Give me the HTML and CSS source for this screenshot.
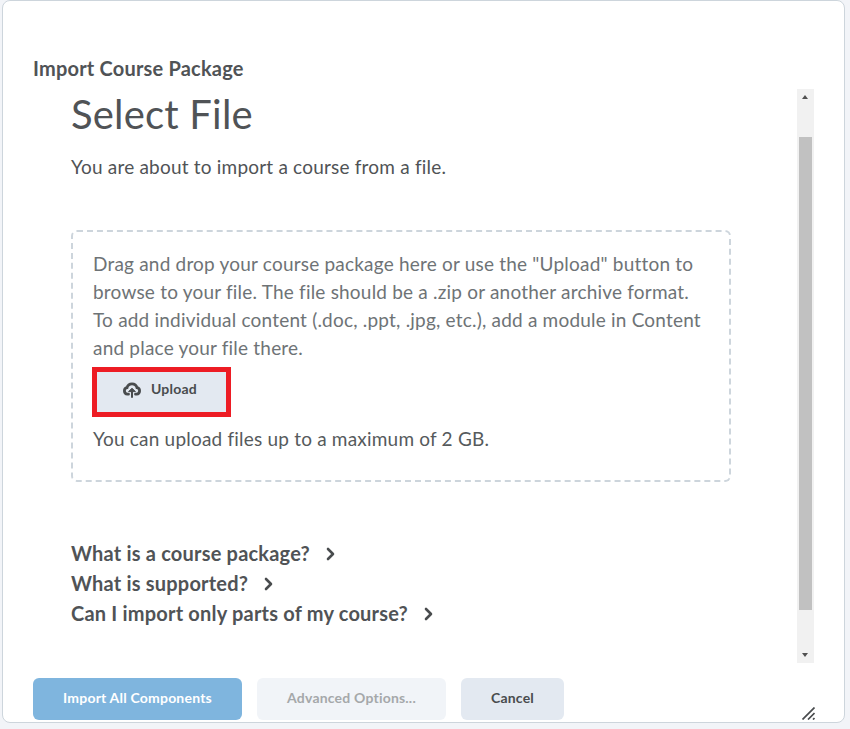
FILE: index.html
```html
<!DOCTYPE html>
<html lang="en">
<head>
<meta charset="utf-8">
<title>Import Course Package</title>
<link rel="stylesheet" href="styles.css">
</head>
<body>
<div class="dialog">
  <div class="dialog-title">Import Course Package</div>
  <div class="scroll-row">
    <div class="content">
      <h1 class="heading">Select File</h1>
      <p class="intro">You are about to import a course from a file.</p>
      <div class="dropzone">
        <p class="drop-text">Drag and drop your course package here or use the "Upload" button to browse to your file. The file should be a .zip or another archive format. To add individual content (.doc, .ppt, .jpg, etc.), add a module in Content and place your file there.</p>
        <div class="highlight">
          <button class="upload-btn">
            <svg class="upload-icon" viewBox="0 0 18 16" width="18" height="16" aria-hidden="true">
              <path d="M5.5 12.2H4.4A3.3 3.3 0 0 1 4 5.7 5.2 5.2 0 0 1 14 5.7a3.3 3.3 0 0 1-.4 6.5h-1.1" fill="none" stroke="#494c4e" stroke-width="2.8" stroke-linecap="round"/>
              <path d="M9 15V8" fill="none" stroke="#494c4e" stroke-width="2" stroke-linecap="round"/>
              <path d="M5.6 9.6 9 6.2l3.4 3.4z" fill="#494c4e" stroke="#494c4e" stroke-width="1" stroke-linejoin="round"/>
            </svg>
            <span>Upload</span>
          </button>
        </div>
        <p class="limit">You can upload files up to a maximum of 2 GB.</p>
      </div>
      <ul class="links">
        <li class="link">What is a course package?<svg class="chev" viewBox="0 0 10 14" width="10" height="14" aria-hidden="true"><path d="M2 2l5 5-5 5" fill="none" stroke="#494c4e" stroke-width="2.6" stroke-linecap="round" stroke-linejoin="round"/></svg></li>
        <li class="link">What is supported?<svg class="chev" viewBox="0 0 10 14" width="10" height="14" aria-hidden="true"><path d="M2 2l5 5-5 5" fill="none" stroke="#494c4e" stroke-width="2.6" stroke-linecap="round" stroke-linejoin="round"/></svg></li>
        <li class="link">Can I import only parts of my course?<svg class="chev" viewBox="0 0 10 14" width="10" height="14" aria-hidden="true"><path d="M2 2l5 5-5 5" fill="none" stroke="#494c4e" stroke-width="2.6" stroke-linecap="round" stroke-linejoin="round"/></svg></li>
      </ul>
    </div>
    <div class="scrollbar">
      <span class="arrow-up"></span>
      <div class="thumb"></div>
      <span class="arrow-down"></span>
    </div>
  </div>
  <div class="footer">
    <button class="btn btn-primary">Import All Components</button>
    <button class="btn btn-disabled">Advanced Options...</button>
    <button class="btn btn-cancel">Cancel</button>
  </div>
  <svg class="resize" viewBox="0 0 13 13" width="13" height="13" aria-hidden="true">
    <path d="M0.5 12.5 12.5 0.5M6 12.5 12.5 6M11 12.5 12.5 11" fill="none" stroke="#494c4e" stroke-width="1.7"/>
  </svg>
</div>
</body>
</html>
```
FILE: styles.css
```css
* { box-sizing: border-box; }
html, body { margin: 0; height: 100%; }
body {
  background: #f2f4f8;
  font-family: Lato, "Noto Sans", sans-serif;
  color: #505356;
  letter-spacing: 0.2px;
  overflow: hidden;
}
.dialog {
  position: relative;
  width: 843px;
  height: 723px;
  margin-left: 2px;
  background: #fff;
  border: 1px solid #cdd5dc;
  border-radius: 8px;
  padding: 0 0 0 30px;
  display: flex;
  flex-direction: column;
}
.dialog-title {
  margin-top: 54px;
  font-size: 20px;
  font-weight: 700;
  line-height: 27px;
  height: 34px;
}
.scroll-row {
  display: flex;
  height: 574px;
}
.content {
  width: 764px;
  padding-left: 38px;
}
.heading {
  margin: 0;
  padding-top: 1px;
  font-size: 40px;
  font-weight: 400;
  line-height: 48px;
  letter-spacing: 0.2px;
}
.intro {
  margin: 15px 0 0;
  font-size: 19px;
  line-height: 28px;
}
.dropzone {
  margin-top: 49px;
  width: 660px;
  height: 252px;
  border: 2px dashed #cdd5dc;
  border-radius: 6px;
  padding: 18px 20px;
  color: #6e7376;
}
.drop-text {
  margin: 0;
  font-size: 19px;
  line-height: 28px;
}
.highlight {
  margin-top: 5px;
  margin-left: -1px;
  width: 139px;
  height: 50px;
  border: 5px solid #ed1c24;
}
.upload-btn {
  width: 100%;
  height: 100%;
  border: 0;
  background: #e3e9f1;
  padding: 0 0 8px 26px;
  display: flex;
  align-items: center;
  gap: 10px;
  font: 700 14px Lato, sans-serif;
  letter-spacing: 0.2px;
  color: #494c4e;
}
.upload-icon { margin-top: 4px; flex: none; }
.limit {
  margin: 8px 0 0;
  font-size: 19px;
  line-height: 28px;
  color: #565a5c;
}
.links {
  list-style: none;
  margin: 56px 0 0;
  padding: 0;
}
.link {
  font-size: 20px;
  font-weight: 700;
  line-height: 30px;
  display: flex;
  align-items: center;
}
.chev { margin-left: 16px; margin-top: 2px; }
.scrollbar {
  position: relative;
  width: 17px;
  height: 574px;
  background: #f1f1f1;
}
.thumb {
  position: absolute;
  left: 2px;
  top: 48px;
  width: 13px;
  height: 473px;
  background: #c1c1c1;
}
.arrow-up, .arrow-down {
  position: absolute;
  left: 5px;
  width: 0;
  height: 0;
  border-left: 3.5px solid transparent;
  border-right: 3.5px solid transparent;
}
.arrow-up { top: 6px; border-bottom: 4px solid #505050; }
.arrow-down { bottom: 6px; border-top: 4px solid #505050; }
.footer {
  margin-top: 15px;
  display: flex;
  gap: 15px;
}
.btn {
  height: 42px;
  border: 0;
  border-radius: 6px;
  font: 700 14px Lato, sans-serif;
  letter-spacing: 0.2px;
  padding: 0 0 3px;
}
.btn-primary { width: 209px; background: #7fb5de; color: #fff; }
.btn-disabled { width: 189px; background: #f1f4f8; color: #a5a8aa; }
.btn-cancel { width: 103px; background: #e3e9f1; color: #494c4e; }
.resize {
  position: absolute;
  right: 29px;
  bottom: 2px;
}
```
